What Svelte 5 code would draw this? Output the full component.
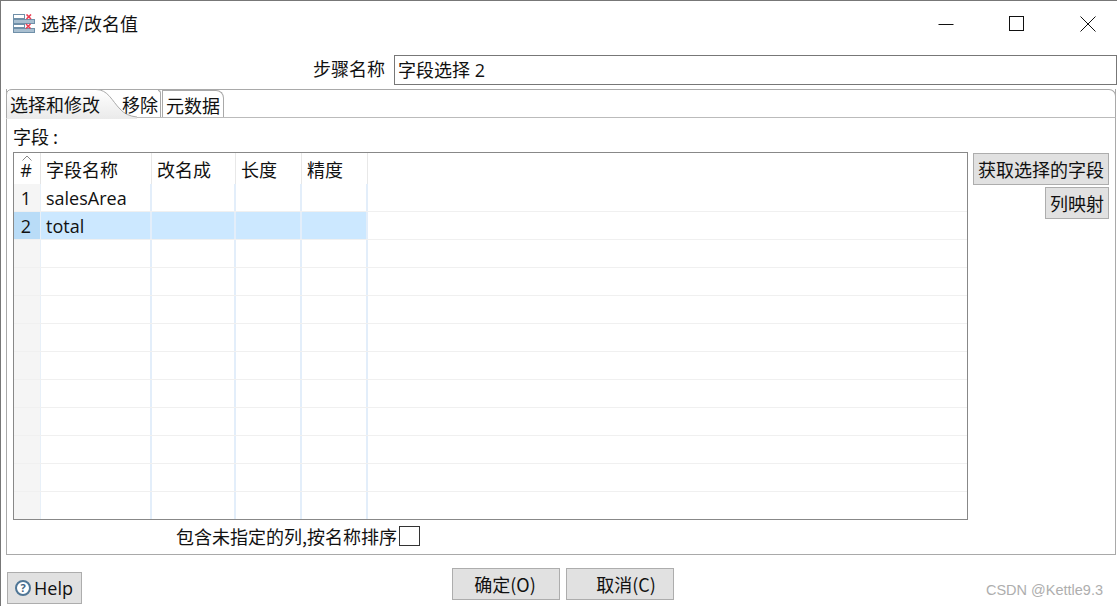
<script>
	const columns = [
		{ label: "字段名称", width: 111 },
		{ label: "改名成", width: 84 },
		{ label: "长度", width: 66 },
		{ label: "精度", width: 66 }
	];
	const rows = [
		{ name: "salesArea" },
		{ name: "total", selected: true },
		...Array.from({ length: 10 }, () => ({ name: "" }))
	];
</script>

<div class="window">
	<header class="titlebar">
		<svg class="app-icon" width="22" height="20" viewBox="0 0 22 20">
			<rect x="0.5" y="0.5" width="11" height="4" fill="#fff" stroke="#6f8fa8" />
			<rect x="0.5" y="5.5" width="21" height="4" fill="#a9bfd0" stroke="#6f8fa8" />
			<rect x="0.5" y="10.5" width="11" height="3" fill="#fff" stroke="#6f8fa8" />
			<rect x="0.5" y="14.5" width="21" height="4" fill="#a9bfd0" stroke="#6f8fa8" />
			<path d="M13.5 0.5l4.5 4.5M18 0.5l-4.5 4.5M13 10l4.5 4.5M17.5 10l-4.5 4.5" stroke="#ec3f55" stroke-width="1.6" fill="none" />
		</svg>
		<span class="title">选择/改名值</span>
		<div class="controls">
			<svg width="16" height="16" viewBox="0 0 16 16"><path d="M0.5 8.5h15" stroke="#111" fill="none" /></svg>
			<svg width="16" height="16" viewBox="0 0 16 16"><rect x="0.5" y="0.5" width="14" height="14" stroke="#111" fill="none" /></svg>
			<svg width="16" height="16" viewBox="0 0 16 16"><path d="M0.5 0.5l15 15M15.5 0.5l-15 15" stroke="#111" fill="none" /></svg>
		</div>
	</header>

	<div class="step-row">
		<span class="step-label">步骤名称</span>
		<div class="step-input">字段选择 2</div>
	</div>

	<section class="folder">
		<div class="tabs">
			<span class="tab tab-active">选择和修改</span>
			<span class="tab tab-remove">移除</span>
			<span class="tab tab-meta">元数据</span>
			<svg class="tab-curve" width="132" height="30" viewBox="0 0 132 30">
				<defs>
					<linearGradient id="tab-fill" x1="0" y1="0" x2="0" y2="1">
						<stop offset="0" stop-color="#fff" />
						<stop offset="1" stop-color="#eaeaea" />
					</linearGradient>
				</defs>
				<path d="M0.5 29V6Q0.5 0.5 6 0.5H90C102 0.5 106 12 114 20Q120 27 131 28V30H0.5Z" fill="url(#tab-fill)" />
				<path d="M0.5 29V6Q0.5 0.5 6 0.5H90C102 0.5 106 12 114 20Q120 27 131 28" fill="none" stroke="#a9a9a9" />
			</svg>
		</div>

		<div class="folder-body">
			<div class="fields-label">字段 :</div>
			<div class="fields-row">
				<div class="grid">
					<div class="row head">
						<div class="num">
							<svg class="sort" width="10" height="6" viewBox="0 0 10 6"><path d="M0.5 5.5L5 1l4.5 4.5" fill="none" stroke="#888" /></svg>
							#
						</div>
						{#each columns as col}
							<div class="cell" style="width: {col.width}px">{col.label}</div>
						{/each}
					</div>
					{#each rows as row, i}
						<div class="row" class:selected={row.selected}>
							<div class="num">{i + 1 <= 2 ? i + 1 : ""}</div>
							{#each columns as col, c}
								<div class="cell" style="width: {col.width}px">{c === 0 ? row.name : ""}</div>
							{/each}
							<div class="rest"></div>
						</div>
					{/each}
				</div>
				<div class="side-buttons">
					<button type="button" class="btn">获取选择的字段</button>
					<button type="button" class="btn">列映射</button>
				</div>
			</div>
			<div class="check-row">
				<span>包含未指定的列,按名称排序</span>
				<span class="checkbox"></span>
			</div>
		</div>
	</section>

	<footer class="footer">
		<button type="button" class="btn help">
			<svg width="18" height="18" viewBox="0 0 18 18">
				<circle cx="9" cy="9" r="7" fill="#fff" stroke="#4f7696" stroke-width="2" />
				<text x="9" y="13" text-anchor="middle" class="help-mark">?</text>
			</svg>
			Help
		</button>
		<div class="actions">
			<button type="button" class="btn action">确定(O)</button>
			<button type="button" class="btn action cancel">取消(C)</button>
		</div>
		<span class="mark">CSDN @Kettle9.3</span>
	</footer>
</div>

<style>
	:global(body) {
		background: #fff;
	}
	.window {
		width: 1117px;
		height: 606px;
		box-sizing: border-box;
		border-top: 1px solid #777;
		border-left: 1px solid #777;
		display: flex;
		flex-direction: column;
		overflow: hidden;
		color: #111;
		font-family: "Noto Sans CJK SC", "Open Sans", sans-serif;
		font-size: 18px;
		line-height: 24px;
	}
	.titlebar {
		height: 47px;
		flex: none;
		display: flex;
		align-items: center;
		padding: 0 21px 0 12px;
		margin-top: -1px;
	}
	.app-icon {
		margin-right: 6px;
	}
	.title {
		flex: 1;
		margin-top: -2px;
		word-spacing: 0;
	}
	.controls {
		display: flex;
		gap: 55px;
	}
	.step-row {
		height: 30px;
		flex: none;
		margin-top: 8px;
		display: flex;
		justify-content: flex-end;
	}
	.step-label {
		margin-right: 9px;
		line-height: 26px;
	}
	.step-input {
		width: 723px;
		box-sizing: border-box;
		border: 1px solid #777;
		padding-left: 3px;
		line-height: 28px;
		font-family: "Open Sans", "Noto Sans CJK SC", sans-serif;
	}
	.folder {
		margin: 4px 0 0 5px;
		width: 1110px;
		height: 466px;
		flex: none;
		box-sizing: border-box;
		border: 1px solid #a9a9a9;
		border-top: none;
		display: flex;
		flex-direction: column;
	}
	.tabs {
		position: relative;
		height: 29px;
		flex: none;
		box-sizing: border-box;
		border-top: 1px solid #a9a9a9;
		border-bottom: 1px solid #bbb;
		border-radius: 7px 7px 0 0;
		border-right: 1px solid #a9a9a9;
		margin-right: -1px;
		margin-left: -1px;
	}
	.tab-curve {
		position: absolute;
		left: 0;
		top: -1px;
	}
	.tab {
		position: absolute;
		top: 1px;
		z-index: 1;
		line-height: 26px;
		white-space: nowrap;
	}
	.tab-active {
		left: 4px;
	}
	.tab-remove {
		left: 116px;
	}
	.tab-meta {
		left: 156px;
		padding: 0 3px;
		height: 27px;
		top: 0;
		line-height: 28px;
		box-sizing: border-box;
		border: 1px solid #a9a9a9;
		border-width: 1px 1px 0;
		border-radius: 0 8px 0 0;
	}
	.tab-remove::after {
		content: "";
		position: absolute;
		left: 36px;
		top: -1px;
		width: 3px;
		height: 27px;
		box-sizing: border-box;
		border: 1px solid #a9a9a9;
		border-width: 1px 1px 0 0;
		border-radius: 0 6px 0 0;
	}
	.folder-body {
		flex: 1;
		display: flex;
		flex-direction: column;
		padding: 6px 0 0 6px;
	}
	.fields-label {
		height: 28px;
		line-height: 24px;
	}
	.fields-row {
		display: flex;
		align-items: flex-start;
	}
	.grid {
		width: 955px;
		height: 368px;
		flex: none;
		box-sizing: border-box;
		border: 1px solid #888;
		overflow: hidden;
		font-family: "Open Sans", "Noto Sans CJK SC", sans-serif;
	}
	.row {
		display: flex;
		height: 28px;
		box-sizing: border-box;
		border-bottom: 1px solid #f0f0f0;
	}
	.row.head {
		height: 31px;
		border-bottom: none;
		font-family: "Noto Sans CJK SC", sans-serif;
	}
	.num {
		width: 27px;
		flex: none;
		box-sizing: border-box;
		text-align: center;
		background: #f5f5f5;
		border-right: 1px solid #e8f0f8;
		line-height: 28px;
		position: relative;
		padding-right: 2px;
	}
	.head .num {
		background: #fff;
		border-right: 1px solid #e4e4e4;
		font-family: "Open Sans", sans-serif;
		font-size: 18px;
		line-height: 34px;
	}
	.sort {
		position: absolute;
		left: 8px;
		top: 2px;
	}
	.cell {
		flex: none;
		box-sizing: border-box;
		padding-left: 5px;
		border-right: 2px solid #e3eefa;
		line-height: 28px;
		white-space: nowrap;
	}
	.head .cell {
		border-right: 1px solid #e8e8e8;
		line-height: 32px;
	}
	.rest {
		flex: 1;
		background: #fff;
	}
	.selected {
		background: #cce8ff;
	}
	.selected .num {
		background: #b9dcf7;
	}
	.side-buttons {
		flex: 1;
		display: flex;
		flex-direction: column;
		align-items: flex-end;
		gap: 2px;
		padding: 1px 6px 0 0;
	}
	.btn {
		font: inherit;
		color: inherit;
		background: #e1e1e1;
		border: 1px solid #adadad;
		padding: 0 4px;
		height: 32px;
		line-height: 28px;
	}
	.check-row {
		margin-top: 5px;
		display: flex;
		align-items: center;
		gap: 2px;
		padding-left: 163px;
		height: 22px;
	}
	.checkbox {
		width: 21px;
		height: 20px;
		box-sizing: border-box;
		border: 1px solid #333;
	}
	.footer {
		flex: 1;
		position: relative;
		display: flex;
		align-items: flex-start;
		padding-left: 6px;
	}
	.help {
		margin-top: 17px;
		width: 75px;
		display: flex;
		align-items: center;
		gap: 2px;
		padding: 0 0 0 6px;
		font-family: "Open Sans", sans-serif;
	}
	.help-mark {
		font-family: "Open Sans", sans-serif;
		font-size: 11px;
		font-weight: 700;
		fill: #3f6482;
	}
	.actions {
		display: flex;
		gap: 6px;
		margin: 13px 0 0 370px;
	}
	.action {
		width: 108px;
		padding-right: 6px;
		font-size: 18px;
	}
	.cancel {
		padding: 0 0 0 12px;
	}
	.mark {
		position: absolute;
		right: 14px;
		top: 26px;
		font-family: "Liberation Sans", sans-serif;
		font-size: 14.5px;
		line-height: 18px;
		color: #aeaeae;
	}
</style>
